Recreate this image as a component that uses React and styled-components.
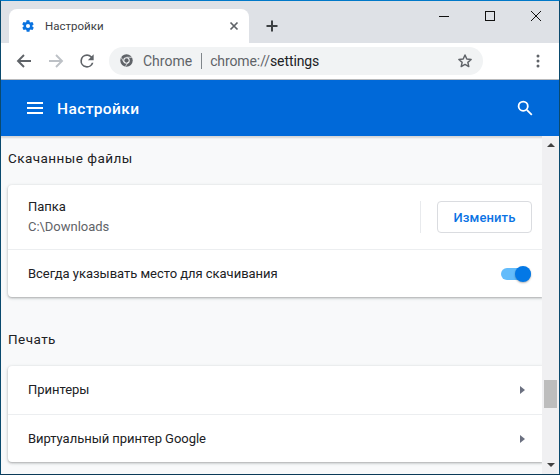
import React from 'react';
import styled, { createGlobalStyle } from 'styled-components';

const Global = createGlobalStyle`
  html, body { margin: 0; padding: 0; width: 560px; height: 475px; overflow: hidden; background: #fff; }
  * { box-sizing: border-box; }
  body { font-family: Roboto, "Noto Sans", sans-serif; }
`;

const Win = styled.div`
  width: 560px; height: 475px; display: flex; flex-direction: column;
  border-style: solid; border-color: #0078c8 #0a4a6e #0a3a58 #0a4a6e; border-width: 1px 1px 1px 1px;
  overflow: hidden;
`;
const TabStrip = styled.div`
  height: 42px; flex: none; background: #dee1e6; display: flex; align-items: flex-end; padding-left: 8px;
`;
const Tab = styled.div`
  width: 240px; height: 34px; background: #fff; border-radius: 8px 8px 0 0;
  display: flex; align-items: center; padding: 0 10px 0 12px; gap: 10px;
`;
const TabTitle = styled.span`
  flex: 1; font-size: 11.5px; color: #3c4043; letter-spacing: 0; font-family: Roboto, sans-serif;
`;
const NewTab = styled.div`
  width: 34px; height: 34px; margin-left: 6px; display: flex; align-items: center; justify-content: center;
`;
const WinControls = styled.div`
  margin-left: auto; height: 100%; display: flex; align-self: flex-start; padding-top: 7px;
`;
const WinBtn = styled.div`
  width: 46px; height: 16px; display: flex; align-items: center; justify-content: center;
`;
const Toolbar = styled.div`
  height: 37px; flex: none; background: #fff; border-bottom: 1px solid #b9babc;
  display: flex; align-items: center; padding: 0 0 1px 0;
`;
const NavBtn = styled.div`
  width: 32px; height: 28px; display: flex; align-items: center; justify-content: center; flex: none;
  padding-right: ${p => p.$nudge || 0}px;
`;
const NavGroup = styled.div`
  display: flex; padding-left: 7px; margin-right: 5px;
`;
const Omnibox = styled.div`
  width: 374px; height: 28px; background: #f1f3f4; border-radius: 14px; flex: none;
  display: flex; align-items: center; padding: 0 10px 0 11px; font-size: 14px; letter-spacing: 0;
`;
const OmniSite = styled.span`
  color: #5f6368; margin-left: 10px;
`;
const OmniSep = styled.span`
  width: 1px; height: 16px; background: #80868b; margin: 0 8px 0 9px;
`;
const OmniUrl = styled.span`
  color: #5f6368; flex: 1; letter-spacing: -0.1px;
  b { color: #202124; font-weight: 400; }
`;
const MenuBtn = styled.div`
  margin-left: auto; margin-right: 5px; width: 32px; display: flex; justify-content: center;
`;
const Header = styled.header`
  height: 56px; flex: none; background: #0069d9; display: flex; align-items: center;
  padding: 0 26px 0 26px; color: #fff;
`;
const HeaderTitle = styled.h1`
  margin: 0 0 0 14px; padding-top: 1px; font-size: 15.5px; font-weight: 500; letter-spacing: 0.4px; flex: 1;
`;
const Body = styled.div`
  flex: 1; min-height: 0; display: flex; background: #f8f9fa; position: relative;
  box-shadow: inset 0 3px 2px -1px rgba(0,0,0,0.14);
`;
const Main = styled.main`
  flex: 1; min-width: 0; padding: 0 0 0 7px; overflow: hidden;
`;
const SectionTitle = styled.h2`
  margin: 0; height: ${p => p.$h}px; padding-top: ${p => p.$top}px; font-size: 13.5px; font-weight: 400; color: #202124; letter-spacing: 0.45px; line-height: 18px;
`;
const Card = styled.section`
  background: #fff; border-radius: 4px 0 0 4px;
  box-shadow: 0 1px 2px rgba(60,64,67,0.3), 0 1px 3px 1px rgba(60,64,67,0.12);
`;
const Row = styled.div`
  height: ${p => p.$h}px; display: flex; align-items: center; padding: 0 10px 0 20px;
  & + & { border-top: 1px solid #eceef0; }
`;
const RowText = styled.div`
  flex: 1; font-size: 13px; color: #202124; letter-spacing: -0.03px; line-height: 20px;
`;
const SubText = styled.div`
  color: #5f6368; font-size: 13px;
`;
const VSep = styled.div`
  width: 1px; height: 32px; background: #e8eaed; margin-right: 16px;
`;
const Button = styled.button`
  width: 95px; height: 32px; background: #fff; border: 1px solid #dadce0; border-radius: 4px;
  font: 500 13px Roboto, sans-serif; color: #0b73e4; letter-spacing: 0.1px; padding: 0;
`;
const Toggle = styled.div`
  position: relative; width: 30px; height: 12px; border-radius: 6px; background: #63bcfb; margin-right: 1px;
`;
const Knob = styled.div`
  position: absolute; right: 0; top: -2px; width: 16px; height: 16px; border-radius: 50%; background: #0378e6;
  box-shadow: 0 1px 2px rgba(0,0,0,0.3);
`;
const Arrow = styled.div`
  width: 0; height: 0; border-left: 5px solid #6b7080; border-top: 4.5px solid transparent; border-bottom: 4.5px solid transparent; margin-right: 7px;
`;
const Scrollbar = styled.aside`
  width: 17px; flex: none; background: #f0f0f2; display: flex; flex-direction: column; align-items: center; padding: 5px 0 5px; position: relative;
`;
const ScrollUp = styled.div`
  width: 0; height: 0; border-bottom: 4px solid #404040; border-left: 4px solid transparent; border-right: 4px solid transparent; margin-top: 2px;
`;
const ScrollDown = styled.div`
  width: 0; height: 0; border-top: 4px solid #404040; border-left: 4px solid transparent; border-right: 4px solid transparent; margin-top: auto; margin-bottom: 2px;
`;
const Thumb = styled.div`
  position: absolute; left: 2px; top: 244px; width: 13px; height: 28px; background: #bdbdbd;
`;

export default function App() {
  return (
    <>
      <Global />
      <Win>
        <TabStrip>
          <Tab>
            <svg width="14" height="14" viewBox="0 0 24 24" fill="#0a73e0">
              <path fillRule="evenodd" d="M19.4 13c.1-.3.1-.7.1-1s0-.7-.1-1l2.1-1.6c.2-.1.2-.4.1-.6l-2-3.5c-.1-.2-.4-.3-.6-.2l-2.5 1c-.5-.4-1.1-.7-1.7-1l-.4-2.6c0-.3-.2-.5-.5-.5h-4c-.3 0-.5.2-.5.4l-.4 2.7c-.6.2-1.1.6-1.7 1l-2.5-1c-.2-.1-.5 0-.6.2l-2 3.5c-.1.2 0 .5.1.6L4.6 11c0 .3-.1.7-.1 1s0 .7.1 1l-2.1 1.6c-.2.1-.2.4-.1.6l2 3.5c.1.2.4.3.6.2l2.5-1c.5.4 1.1.7 1.7 1l.4 2.6c0 .3.2.5.5.5h4c.3 0 .5-.2.5-.4l.4-2.7c.6-.2 1.2-.6 1.7-1l2.5 1c.2.1.5 0 .6-.2l2-3.5c.1-.2.1-.5-.1-.6L19.4 13zM12 15.5a3.5 3.5 0 1 1 0-7 3.5 3.5 0 0 1 0 7z" />
            </svg>
            <TabTitle>Настройки</TabTitle>
            <svg width="10" height="10" viewBox="0 0 10 10" stroke="#5f6368" strokeWidth="1.7" fill="none">
              <path d="M1.5 1.5l7 7M8.5 1.5l-7 7" />
            </svg>
          </Tab>
          <NewTab>
            <svg width="14" height="14" viewBox="0 0 14 14" stroke="#3c4043" strokeWidth="2" fill="none">
              <path d="M7 1.5v11M1.5 7h11" />
            </svg>
          </NewTab>
          <WinControls>
            <WinBtn>
              <svg width="10" height="10" viewBox="0 0 10 10" stroke="#111" fill="none"><path d="M0 5.5h10" /></svg>
            </WinBtn>
            <WinBtn>
              <svg width="10" height="10" viewBox="0 0 10 10" stroke="#111" fill="none"><rect x=".5" y=".5" width="9" height="9" /></svg>
            </WinBtn>
            <WinBtn>
              <svg width="10" height="10" viewBox="0 0 10 10" stroke="#111" fill="none"><path d="M0 0l10 10M10 0L0 10" /></svg>
            </WinBtn>
          </WinControls>
        </TabStrip>
        <Toolbar>
          <NavGroup>
            <NavBtn>
              <svg width="16" height="16" viewBox="0 0 16 16" stroke="#5f6368" strokeWidth="1.9" fill="none"><path d="M15 8H2M8 2L2 8l6 6" /></svg>
            </NavBtn>
            <NavBtn>
              <svg width="16" height="16" viewBox="0 0 16 16" stroke="#bdc1c6" strokeWidth="1.9" fill="none"><path d="M1 8h13M8 2l6 6-6 6" /></svg>
            </NavBtn>
            <NavBtn $nudge={2}>
              <svg width="20" height="20" viewBox="0 0 24 24" fill="#5f6368"><path d="M17.65 6.35A7.96 7.96 0 0 0 12 4a8 8 0 1 0 7.73 10h-2.08A6 6 0 1 1 12 6c1.66 0 3.14.69 4.22 1.78L13 11h7V4l-2.35 2.35z" /></svg>
            </NavBtn>
          </NavGroup>
          <Omnibox>
            <svg width="13" height="13" viewBox="0 0 24 24">
              <circle cx="12" cy="12" r="11.5" fill="#5f6368" />
              <circle cx="12" cy="12" r="6" fill="#f1f3f4" />
              <circle cx="12" cy="12" r="4" fill="#5f6368" />
              <path d="M12 6h10M7 15L2 6M15 15l-5 8" stroke="#f1f3f4" strokeWidth="1.4" />
            </svg>
            <OmniSite>Chrome</OmniSite>
            <OmniSep />
            <OmniUrl>chrome://<b>settings</b></OmniUrl>
            <svg width="16" height="16" viewBox="0 0 24 24" fill="none" stroke="#5f6368" strokeWidth="2.2" strokeLinejoin="round">
              <path d="M12 3l2.7 6 6.5.7-4.9 4.3 1.4 6.4L12 17.1l-5.7 3.3 1.4-6.4-4.9-4.3 6.5-.7z" />
            </svg>
          </Omnibox>
          <MenuBtn>
            <svg width="4" height="14" viewBox="0 0 4 14" fill="#5f6368">
              <circle cx="2" cy="2" r="1.5" /><circle cx="2" cy="7" r="1.5" /><circle cx="2" cy="12" r="1.5" />
            </svg>
          </MenuBtn>
        </Toolbar>
        <Header>
          <svg width="16" height="12" viewBox="0 0 16 12" fill="#fff">
            <rect width="16" height="2" /><rect y="5" width="16" height="2" /><rect y="10" width="16" height="2" />
          </svg>
          <HeaderTitle>Настройки</HeaderTitle>
          <svg width="16" height="16" viewBox="0 0 16 16" stroke="#fff" strokeWidth="1.8" fill="none">
            <circle cx="6.2" cy="6.2" r="4.6" /><path d="M9.8 9.8l5 5" />
          </svg>
        </Header>
        <Body>
          <Main>
            <SectionTitle $h={49} $top={13}>Скачанные файлы</SectionTitle>
            <Card>
              <Row $h={64}>
                <RowText>
                  Папка
                  <SubText>C:\Downloads</SubText>
                </RowText>
                <VSep />
                <Button>Изменить</Button>
              </Row>
              <Row $h={48}>
                <RowText>Всегда указывать место для скачивания</RowText>
                <Toggle><Knob /></Toggle>
              </Row>
            </Card>
            <SectionTitle $h={69} $top={33}>Печать</SectionTitle>
            <Card>
              <Row $h={48}>
                <RowText>Принтеры</RowText>
                <Arrow />
              </Row>
              <Row $h={48}>
                <RowText>Виртуальный принтер Google</RowText>
                <Arrow />
              </Row>
            </Card>
          </Main>
          <Scrollbar>
            <ScrollUp />
            <Thumb />
            <ScrollDown />
          </Scrollbar>
        </Body>
      </Win>
    </>
  );
}
